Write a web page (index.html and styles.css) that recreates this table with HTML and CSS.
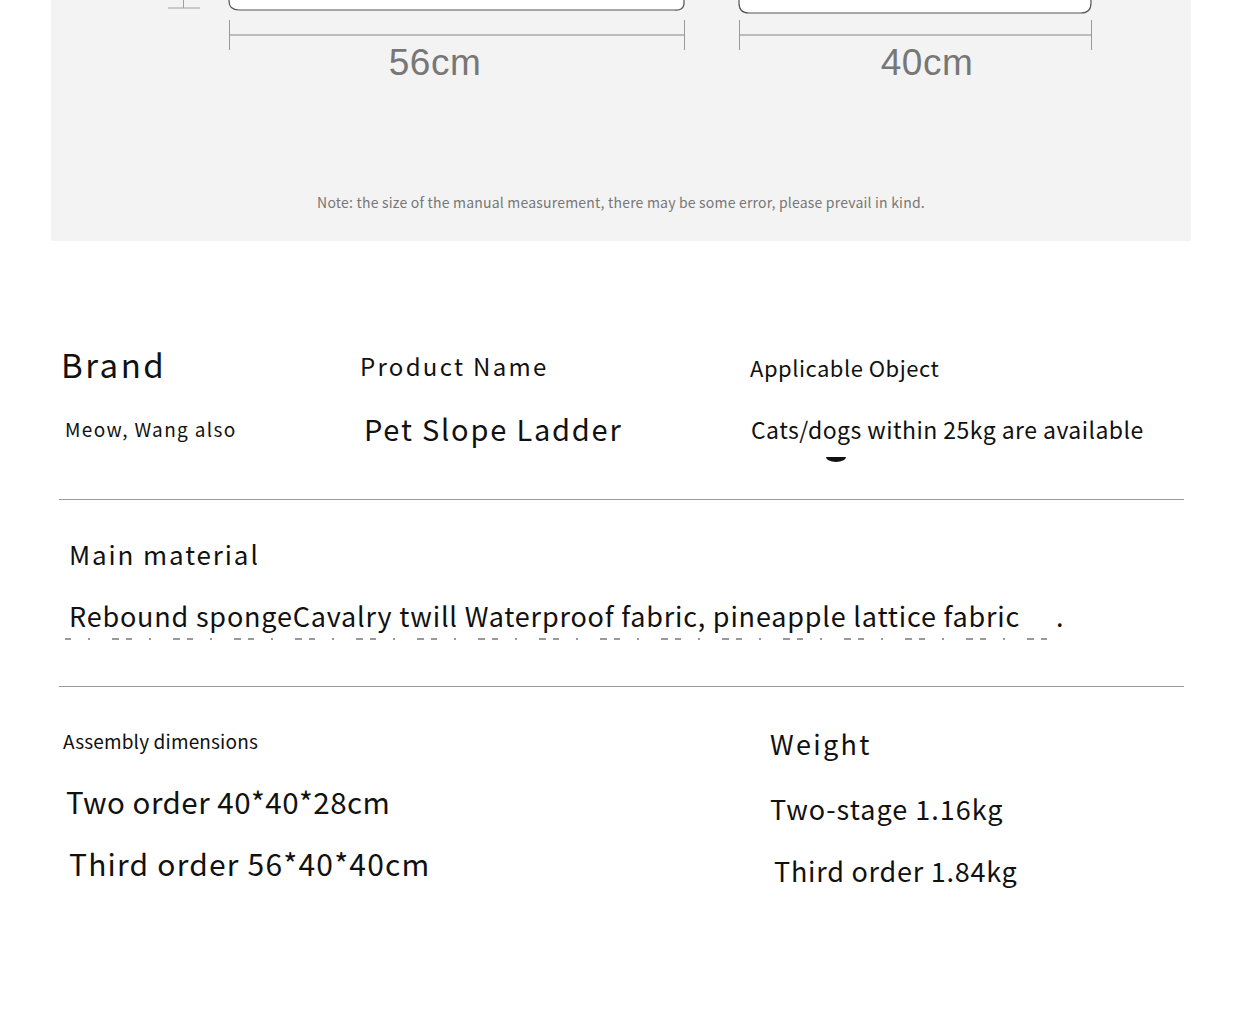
FILE: index.html
```html
<!DOCTYPE html>
<html lang="en">
<head>
<meta charset="utf-8">
<title>Pet Slope Ladder</title>
<link rel="stylesheet" href="styles.css">
</head>
<body>
<div class="panel">
  <svg class="diagram" width="1140" height="190" viewBox="51 0 1140 190">
    <path d="M168 8 H200 M183.5 0 V8" stroke="#a0a0a0" stroke-width="1" fill="none"/>
    <path d="M229 -10 V1 Q229 10 239 10 H674 Q684 11 684 3 V-10 Z" fill="#ffffff" stroke="#555" stroke-width="1.2"/>
    <path d="M739 -10 V3 Q739 13 749 13 H1081 Q1091 13 1091 3 V-10 Z" fill="#ffffff" stroke="#555" stroke-width="1.2"/>
    <path d="M229 35 H684 M739 35 H1091" stroke="#aaaaaa" stroke-width="1.6" fill="none"/>
    <path d="M229.5 20 V50 M684.5 20 V50 M739.5 20 V50 M1091.5 20 V50" stroke="#999" stroke-width="1" fill="none"/>
    <text class="dim" x="435" y="75" text-anchor="middle">56cm</text>
    <text class="dim" x="927" y="75" text-anchor="middle">40cm</text>
  </svg>
  <p class="note">Note: the size of the manual measurement, there may be some error, please prevail in kind.</p>
</div>

<div class="specs">
  <div class="row row-head">
    <div class="col c1"><span class="brand">Brand</span></div>
    <div class="col c2"><span class="pname">Product Name</span></div>
    <div class="col c3"><span class="aobj">Applicable Object</span></div>
  </div>
  <div class="row row-val">
    <div class="col c1 v1"><span class="meow">Meow, Wang also</span></div>
    <div class="col c2 v2"><span class="pet">Pet Slope Ladder</span></div>
    <div class="col c3 v3"><span class="cats">Cats/dogs within 25kg are available</span></div>
  </div>
  <div class="arc"></div>
  <div class="divider first"></div>

  <div class="mat-title">Main material</div>
  <div class="mat-text">Rebound spongeCavalry twill Waterproof fabric, pineapple lattice fabric<span class="dot">.</span></div>
  <div class="ghost"></div>
  <div class="divider second"></div>

  <div class="bottom">
    <div class="bcol left">
      <div class="asm">Assembly dimensions</div>
      <div class="two">Two order 40*40*28cm</div>
      <div class="third">Third order 56*40*40cm</div>
    </div>
    <div class="bcol right">
      <div class="wt">Weight</div>
      <div class="ws">Two-stage 1.16kg</div>
      <div class="wt3">Third order 1.84kg</div>
    </div>
  </div>
</div>
</body>
</html>
```

FILE: styles.css
```css
* { box-sizing: border-box; }
html, body { margin: 0; padding: 0; background: #ffffff; }
body {
  width: 1242px;
  height: 1021px;
  overflow: hidden;
  font-family: "Noto Sans CJK SC", "Noto Sans", sans-serif;
  color: #111;
}
.panel {
  margin-left: 51px;
  width: 1140px;
  height: 241px;
  background: #f3f3f3;
  display: flex;
  flex-direction: column;
}
.diagram {
  display: block;
  width: 1140px;
  height: 190px;
}
.dim {
  font-family: "Liberation Sans", Arial, sans-serif;
  font-size: 37px;
  fill: #777;
  letter-spacing: 0.5px;
}
.note {
  margin: 5px 0 0 0;
  text-align: center;
  font-size: 14px;
  line-height: 1;
  letter-spacing: 0.2px;
  color: #777;
}
.specs {
  margin-left: 59px;
  width: 1125px;
}
.row {
  display: flex;
  align-items: baseline;
  line-height: 1;
}
.col.c1 { width: 301px; }
.col.c2 { width: 390px; }
.col.c3 { flex: 1; }
.row-head { margin-top: 107px; }
.row-head .c1 { padding-left: 2px; }
.row-head .c2 { align-self: flex-start; margin-top: 6px; }
.row-head .c3 { align-self: flex-start; margin-top: 8px; }
.brand { font-size: 33px; letter-spacing: 2.5px; }
.pname { font-size: 24px; letter-spacing: 2.3px; }
.aobj { font-size: 22px; letter-spacing: 0.5px; }
.row-val { margin-top: 33px; }
.v1 { padding-left: 6px; align-self: flex-start; margin-top: 5px; }
.v2 { padding-left: 4px; }
.v3 { padding-left: 1px; align-self: flex-start; margin-top: 4px; }
.meow { font-size: 19px; letter-spacing: 1.35px; }
.pet { font-size: 29px; letter-spacing: 1.8px; }
.cats { font-size: 23px; letter-spacing: 0.45px; }
.arc {
  margin: 14px 0 0 767px;
  width: 20px;
  height: 5px;
  border-radius: 0 0 10px 10px / 0 0 5px 5px;
  background: #111;
}
.divider {
  height: 1px;
  background: #9a9a9a;
}
.divider.first { margin-top: 37px; }
.mat-title {
  margin-top: 41px;
  padding-left: 10px;
  font-size: 26px;
  line-height: 1;
  letter-spacing: 1.9px;
}
.mat-text {
  margin-top: 35px;
  padding-left: 10px;
  font-size: 27px;
  line-height: 1;
  letter-spacing: 0.8px;
  white-space: nowrap;
}
.dot { margin-left: 36px; }
.ghost {
  margin-top: 9px;
  margin-left: 6px;
  width: 990px;
  height: 2px;
  background: repeating-linear-gradient(90deg, #555 0 6px, transparent 6px 23px, #555 23px 25px, transparent 25px 47px, #555 47px 54px, transparent 54px 61px);
  opacity: 0.6;
}
.divider.second { margin-top: 46px; }
.bottom {
  display: flex;
  align-items: flex-start;
}
.bcol { line-height: 1; }
.bcol.left { width: 711px; padding-left: 4px; padding-top: 44px; }
.bcol.right { flex: 1; padding-top: 43px; }
.asm { font-size: 19px; letter-spacing: 0.15px; }
.two { margin-top: 37px; padding-left: 3px; font-size: 29.5px; letter-spacing: 0.5px; }
.third { margin-top: 31px; padding-left: 6px; font-size: 30px; letter-spacing: 1.2px; }
.wt { font-size: 27px; letter-spacing: 2.3px; }
.ws { margin-top: 38px; font-size: 27px; letter-spacing: 1px; }
.wt3 { margin-top: 35px; padding-left: 4px; font-size: 27px; letter-spacing: 0.75px; }
```
